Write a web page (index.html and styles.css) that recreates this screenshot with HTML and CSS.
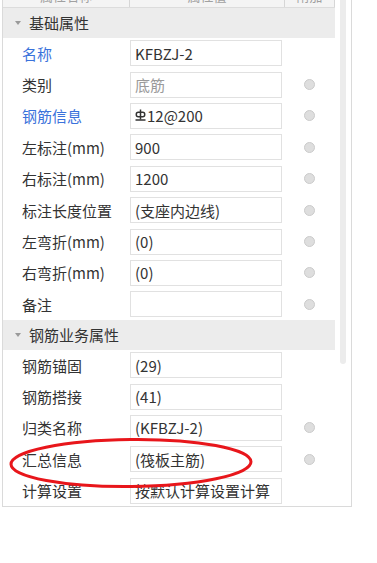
FILE: index.html
```html
<!DOCTYPE html>
<html lang="zh-CN">
<head>
    <meta charset="UTF-8">
    <meta name="viewport" content="width=device-width, initial-scale=1.0">
    <title>属性编辑器</title>
    <link rel="stylesheet" href="styles.css">
</head>
<body>
    <div class="panel">
        <div class="grid">
            <div class="head">
                <div class="hcell c1"><span>属性名称</span></div>
                <div class="hcell c2"><span>属性值</span></div>
                <div class="hcell c3"><span>附加</span></div>
            </div>

            <div class="section"><i class="tri"></i>基础属性</div>
            <div class="row">
                <div class="label blue">名称</div>
                <div class="box">KFBZJ-2</div>
                <div class="extra"></div>
            </div>
            <div class="row">
                <div class="label">类别</div>
                <div class="box muted">底筋</div>
                <div class="extra"><i class="dot"></i></div>
            </div>
            <div class="row">
                <div class="label blue">钢筋信息</div>
                <div class="box">
                    <svg class="rebar" width="11" height="12" viewBox="0 0 11 12">
                        <path d="M5.5 0.5V10.5" stroke="#333" stroke-width="1.5" fill="none"/>
                        <rect x="1.3" y="3.2" width="8.4" height="4.6" rx="2" stroke="#333" stroke-width="1.5" fill="none"/>
                        <path d="M0.5 11H10.5" stroke="#333" stroke-width="1.5" fill="none"/>
                    </svg>12@200
                </div>
                <div class="extra"><i class="dot"></i></div>
            </div>
            <div class="row">
                <div class="label">左标注(mm)</div>
                <div class="box">900</div>
                <div class="extra"><i class="dot"></i></div>
            </div>
            <div class="row">
                <div class="label">右标注(mm)</div>
                <div class="box">1200</div>
                <div class="extra"><i class="dot"></i></div>
            </div>
            <div class="row">
                <div class="label">标注长度位置</div>
                <div class="box">(支座内边线)</div>
                <div class="extra"><i class="dot"></i></div>
            </div>
            <div class="row">
                <div class="label">左弯折(mm)</div>
                <div class="box">(0)</div>
                <div class="extra"><i class="dot"></i></div>
            </div>
            <div class="row">
                <div class="label">右弯折(mm)</div>
                <div class="box">(0)</div>
                <div class="extra"><i class="dot"></i></div>
            </div>
            <div class="row">
                <div class="label">备注</div>
                <div class="box"></div>
                <div class="extra"><i class="dot"></i></div>
            </div>

            <div class="section"><i class="tri"></i>钢筋业务属性</div>
            <div class="row">
                <div class="label">钢筋锚固</div>
                <div class="box">(29)</div>
                <div class="extra"></div>
            </div>
            <div class="row">
                <div class="label">钢筋搭接</div>
                <div class="box">(41)</div>
                <div class="extra"></div>
            </div>
            <div class="row">
                <div class="label">归类名称</div>
                <div class="box">(KFBZJ-2)</div>
                <div class="extra"><i class="dot"></i></div>
            </div>
            <div class="row">
                <div class="label">汇总信息</div>
                <div class="box">(筏板主筋)</div>
                <div class="extra"><i class="dot"></i></div>
            </div>
            <div class="row">
                <div class="label">计算设置</div>
                <div class="box">按默认计算设置计算</div>
                <div class="extra"></div>
            </div>
        </div>
        <div class="scroll"><div class="thumb"></div></div>
    </div>

    <svg class="mark" width="250" height="56" viewBox="0 0 250 56">
        <ellipse cx="123" cy="27" rx="120" ry="23.5" fill="none" stroke="#e8161b" stroke-width="3" transform="rotate(-0.6 123 27)"/>
    </svg>
</body>
</html>
```

FILE: styles.css
```css
body {
    margin: 0;
    background: #fff;
    font-family: "Noto Sans CJK SC", "Microsoft YaHei", sans-serif;
    font-size: 15px;
    color: #333;
}

.panel {
    position: relative;
    margin-left: 2px;
    width: 348px;
    border: 1px solid #dadada;
    border-top: none;
    display: flex;
    background: #fff;
}

.grid {
    width: 332px;
}

.head {
    display: flex;
    height: 7px;
    border-bottom: 1px solid #dcdcdc;
    background: #f4f4f4;
    font-size: 13px;
    color: #a0a0a0;
}
.hcell {
    height: 7px;
    overflow: hidden;
    border-right: 1px solid #d6d6d6;
    text-align: center;
}
.hcell span {
    display: block;
    line-height: 16px;
    margin-top: -12px;
}
.c1 { width: 126px; }
.c2 { width: 154px; }
.c3 { width: 49px; }

.section {
    height: 29.5px;
    display: flex;
    align-items: center;
    background: #ececec;
    padding-left: 12px;
    font-size: 15px;
    color: #333;
}
.tri {
    width: 0;
    height: 0;
    border-left: 3px solid transparent;
    border-right: 3px solid transparent;
    border-top: 4px solid #9a9a9a;
    margin-right: 8px;
}

.row {
    height: 31.4px;
    display: flex;
    align-items: center;
}
.label {
    width: 108px;
    padding-left: 19px;
    white-space: nowrap;
}
.blue {
    color: #3a72db;
}
.box {
    width: 146px;
    height: 24px;
    border: 1px solid #e1e1e1;
    padding-left: 4px;
    display: flex;
    align-items: center;
    white-space: nowrap;
    overflow: hidden;
}
.muted {
    color: #9a9a9a;
}
.rebar {
    margin-right: 1px;
    margin-bottom: 2px;
}
.extra {
    flex: 1;
    display: flex;
    justify-content: center;
    padding-left: 2px;
}
.dot {
    width: 9px;
    height: 9px;
    border-radius: 50%;
    background: #dedede;
    border: 1px solid #cbcbcb;
}

.scroll {
    width: 6px;
    margin-left: 5px;
}
.thumb {
    height: 364px;
    background: #ececec;
    border-radius: 0 0 3px 3px;
}

.mark {
    position: absolute;
    left: 8px;
    top: 436px;
}
```
